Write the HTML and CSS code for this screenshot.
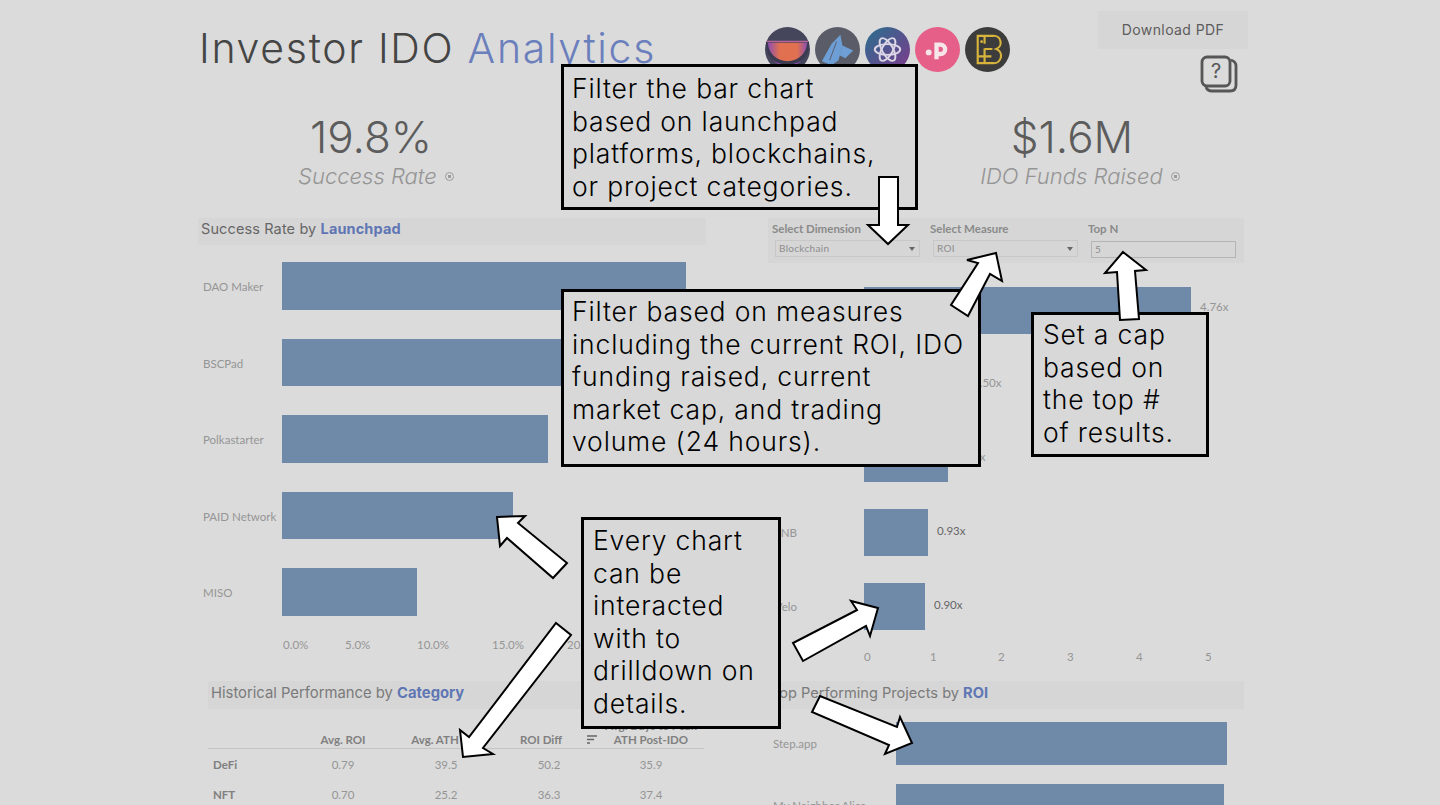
FILE: index.html
```html
<!DOCTYPE html>
<html lang="en">
<head>
    <meta charset="UTF-8">
    <meta name="viewport" content="width=device-width, initial-scale=1.0">
    <title>Investor IDO Analytics</title>
    <link rel="stylesheet" href="styles.css">
</head>
<body>
    <div class="dash">
        <header class="top">
            <h1 class="title">Investor IDO <span class="accent">Analytics</span></h1>
            <div class="logos">
                <svg class="logo" viewBox="0 0 46 46">
                    <defs>
                        <linearGradient id="bowl" x1="0" x2="1" y1="0" y2="0">
                            <stop offset="0" stop-color="#8d4fb4"/>
                            <stop offset="0.3" stop-color="#e0704f"/>
                            <stop offset="0.75" stop-color="#e0704f"/>
                            <stop offset="1" stop-color="#8d4fb4"/>
                        </linearGradient>
                    </defs>
                    <circle cx="23" cy="23" r="23" fill="#45465c"/>
                    <path d="M1 15H45V18A22 22 0 0 1 1 18Z" fill="#3a3b50"/>
                    <path d="M2 14H44V15.5H2Z" fill="#b8639a"/>
                    <path d="M3 16H43A20 19 0 0 1 3 16Z" fill="url(#bowl)"/>
                    <path d="M8 34Q23 43 38 34Q30 41 23 41Q16 41 8 34Z" fill="#8d4fb4"/>
                </svg>
                <svg class="logo" viewBox="0 0 46 46">
                    <circle cx="23" cy="23" r="23" fill="#5a5d68"/>
                    <path d="M7 35L17 17L26 8L28 19L24 34L17 39Z" fill="#6d9fd6"/>
                    <path d="M15 34L22 15" stroke="#5a5d68" stroke-width="1"/>
                    <path d="M28 19L39 24L31 32L25 29Z" fill="#6d9fd6"/>
                </svg>
                <svg class="logo" viewBox="0 0 46 46">
                    <defs>
                        <linearGradient id="knot" x1="0" x2="1" y1="0" y2="1">
                            <stop offset="0" stop-color="#27708f"/>
                            <stop offset="1" stop-color="#80398c"/>
                        </linearGradient>
                    </defs>
                    <circle cx="23" cy="23" r="23" fill="url(#knot)"/>
                    <g fill="none" stroke="#dcd6e6" stroke-width="2">
                        <ellipse cx="23" cy="23" rx="13" ry="5.5"/>
                        <ellipse cx="23" cy="23" rx="13" ry="5.5" transform="rotate(60 23 23)"/>
                        <ellipse cx="23" cy="23" rx="13" ry="5.5" transform="rotate(120 23 23)"/>
                    </g>
                </svg>
                <svg class="logo" viewBox="0 0 46 46">
                    <circle cx="23" cy="23" r="23" fill="#e65f88"/>
                    <path d="M22 33V18H26A4.8 4.8 0 0 1 26 27.6H22" fill="none" stroke="#f6e6ea" stroke-width="4.4"/>
                    <circle cx="14" cy="26" r="3" fill="#f6e6ea"/>
                </svg>
                <svg class="logo" viewBox="0 0 46 46">
                    <circle cx="23" cy="23" r="23" fill="#3c3c3c"/>
                    <g fill="none" stroke="#d8b43c" stroke-width="2.2">
                        <path d="M13 9H29A7 7 0 0 1 32 22.5A7.5 7.5 0 0 1 29 37H13Z"/>
                        <path d="M20 9V17M20 22V37M20 22.5H28M13 30H27"/>
                    </g>
                    <circle cx="17" cy="15" r="1.4" fill="#d8b43c"/>
                </svg>
            </div>
            <div class="actions">
                <div class="download">Download PDF</div>
                <svg class="help" viewBox="0 0 38 38">
                    <path d="M31 5C34 6 36 8 36 11V30C36 34 34 36 30 36H12C9 36 7 35 6 32" fill="none" stroke="#565656" stroke-width="2.8"/>
                    <rect x="2" y="2" width="28" height="29" rx="5" fill="#dbdbdb" stroke="#565656" stroke-width="2.8"/>
                    <text x="16" y="23" class="help-mark">?</text>
                </svg>
            </div>
        </header>

        <section class="kpis">
            <div class="kpi">
                <div class="kpi-value">19.8%</div>
                <div class="kpi-label">Success Rate <span class="info"></span></div>
            </div>
            <div class="kpi">
                <div class="kpi-value">$1.6M</div>
                <div class="kpi-label wide">IDO Funds Raised <span class="info"></span></div>
            </div>
        </section>

        <section class="panels">
            <div class="panel">
                <div class="panel-head">Success Rate by <b>Launchpad</b></div>
                <div class="bars">
                    <div class="row"><span class="name">DAO Maker</span><div class="bar" style="width:404px"></div></div>
                    <div class="row"><span class="name">BSCPad</span><div class="bar" style="width:370px"></div></div>
                    <div class="row"><span class="name">Polkastarter</span><div class="bar" style="width:266px"></div></div>
                    <div class="row"><span class="name">PAID Network</span><div class="bar" style="width:231px"></div></div>
                    <div class="row"><span class="name">MISO</span><div class="bar" style="width:135px"></div></div>
                </div>
                <div class="axis pct">
                    <span>0.0%</span><span>5.0%</span><span>10.0%</span><span>15.0%</span><span>20.0%</span>
                </div>
            </div>

            <div class="panel">
                <div class="filters">
                    <div class="filter">
                        <label>Select Dimension</label>
                        <div class="select">Blockchain<i class="caret"></i></div>
                    </div>
                    <div class="filter">
                        <label>Select Measure</label>
                        <div class="select">ROI<i class="caret"></i></div>
                    </div>
                    <div class="filter">
                        <label>Top N</label>
                        <div class="select number">5</div>
                    </div>
                </div>
                <div class="bars roi">
                    <div class="row"><span class="name"></span><div class="bar" style="width:327px"></div><span class="val first">4.76x</span></div>
                    <div class="row"><span class="name"></span><div class="bar" style="width:100px"></div><span class="val">1.50x</span></div>
                    <div class="row"><span class="name"></span><div class="bar" style="width:84px"></div><span class="val">1.22x</span></div>
                    <div class="row"><span class="name">BNB</span><div class="bar" style="width:64px"></div><span class="val dark">0.93x</span></div>
                    <div class="row"><span class="name">Velo</span><div class="bar" style="width:61px"></div><span class="val dark">0.90x</span></div>
                </div>
                <div class="axis nums">
                    <span>0</span><span>1</span><span>2</span><span>3</span><span>4</span><span>5</span>
                </div>
            </div>

            <div class="panel cat">
                <div class="panel-head">Historical Performance by <b>Category</b></div>
                <div class="table">
                    <div class="tr th">
                        <span></span>
                        <span>Avg. ROI</span>
                        <span>Avg. ATH</span>
                        <span>ROI Diff</span>
                        <span class="sort">
                            <svg viewBox="0 0 10 9"><path d="M0 1H10M0 4.5H7M0 8H3" stroke="#666" stroke-width="1.3"/></svg>
                        </span>
                        <span>Avg. Days to Peak<br>ATH Post-IDO</span>
                    </div>
                    <div class="tr">
                        <span class="cat-name">DeFi</span><span>0.79</span><span class="shift-a">39.5</span><span class="shift-b">50.2</span><span></span><span>35.9</span>
                    </div>
                    <div class="tr">
                        <span class="cat-name">NFT</span><span>0.70</span><span class="shift-a">25.2</span><span class="shift-b">36.3</span><span></span><span>37.4</span>
                    </div>
                </div>
            </div>

            <div class="panel">
                <div class="panel-head top-roi">Top Performing Projects by <b>ROI</b></div>
                <div class="bars projects">
                    <div class="row"><span class="name">Step.app</span><div class="bar" style="width:331px"></div></div>
                    <div class="row"><span class="name">My Neighbor Alice</span><div class="bar" style="width:328px"></div></div>
                </div>
            </div>
        </section>
    </div>

    <!-- annotations on top of the dashboard -->
    <div class="note note-bar">Filter the bar chart<br>based on launchpad<br>platforms, blockchains,<br>or project categories.</div>
    <div class="note note-measure">Filter based on measures<br>including the current ROI, IDO<br>funding raised, current<br>market cap, and trading<br>volume (24 hours).</div>
    <div class="note note-cap">Set a cap<br>based on<br>the top #<br>of results.</div>
    <div class="note note-every">Every chart<br>can be<br>interacted<br>with to<br>drilldown on<br>details.</div>

    <svg class="arrows" viewBox="0 0 1440 805">
        <polygon points="879,177 898,177 898,225 908,225 888,244 868,225 879,225"/>
        <polygon points="996,253 1002,281 990,274 968,316 951,305 978,263 967,260"/>
        <polygon points="1123,252 1146,270 1135,271 1139,319 1120,320 1117,272 1105,273"/>
        <polygon points="497,517 525,516 518,523 567,563 553,578 507,538 500,546"/>
        <polygon points="556,623 571,635 483,748 493,754 463,757 460,730 469,737"/>
        <polygon points="878,608 851,601 857,610 793,643 803,661 866,626 870,636"/>
        <polygon points="820,696 812,712 889,745 885,754 912,743 900,717 897,727"/>
    </svg>
</body>
</html>
```

FILE: styles.css
```css
* {
    box-sizing: border-box;
}
html, body {
    height: 100%;
}
body {
    margin: 0;
    background-color: #dbdbdb;
    font-family: 'Inter', 'Lato', sans-serif;
    color: #5a5a5a;
    overflow: hidden;
}
.dash {
    width: 1050px;
    height: 805px;
    margin-left: 198px;
    overflow: hidden;
}

/* header */
.top {
    display: flex;
    height: 120px;
    padding-top: 11px;
}
.title {
    margin: 14px 0 0 1px;
    width: 566px;
    font-size: 41px;
    line-height: 46px;
    font-weight: 300;
    letter-spacing: 1.7px;
    color: #454545;
    white-space: nowrap;
}
.accent {
    color: #6b7fbd;
}
.logos {
    display: flex;
    gap: 5px;
    margin-top: 16px;
    height: 45px;
}
.logo {
    width: 45px;
    height: 45px;
}
.actions {
    margin-left: auto;
    width: 150px;
    display: flex;
    flex-direction: column;
    align-items: flex-end;
}
.download {
    width: 150px;
    height: 38px;
    line-height: 38px;
    text-align: center;
    background: #d6d6d6;
    font-size: 14px;
    letter-spacing: 0.4px;
    color: #5c5c5c;
}
.help {
    width: 38px;
    height: 38px;
    margin: 6px 10px 0 0;
}
.help-mark {
    font-size: 20px;
    fill: #565656;
    text-anchor: middle;
}

/* big numbers */
.kpis {
    display: grid;
    grid-template-columns: 346px 346px;
    justify-content: space-between;
    width: 1047px;
    height: 87px;
}
.kpi {
    text-align: center;
}
.kpi-value {
    font-size: 44px;
    line-height: 50px;
    font-weight: 300;
    color: #5c5c5c;
    margin-top: -8px;
}
.kpi-label {
    font-size: 22px;
    line-height: 28px;
    font-style: italic;
    font-weight: 300;
    color: #959595;
    padding-left: 10px;
}
.kpi-label.wide {
    padding-left: 16px;
}
.info {
    display: inline-block;
    width: 9px;
    height: 9px;
    margin-left: 2px;
    border: 1.5px solid #9c9c9c;
    border-radius: 50%;
    background: radial-gradient(circle, #9c9c9c 0 1.5px, transparent 2px);
    vertical-align: 3px;
}

/* chart panels */
.panels {
    display: grid;
    grid-template-columns: 508px 476px;
    grid-template-rows: 463px 124px;
    column-gap: 62px;
    margin-top: 11px;
}
.panel-head {
    height: 27px;
    line-height: 22px;
    padding-left: 3px;
    background: #d6d6d6;
    font-size: 14.5px;
    letter-spacing: 0.12px;
    color: #666;
}
.panel-head b {
    color: #6076b4;
    font-weight: 700;
}
.bars {
    display: flex;
    flex-direction: column;
    gap: 29px;
    margin-top: 17px;
}
.row {
    display: flex;
    align-items: center;
    height: 47.5px;
}
.bar {
    height: 100%;
    background: #6f89a8;
}
.name {
    width: 84px;
    flex-shrink: 0;
    padding: 2px 0 0 5px;
    font-family: 'Lato', sans-serif;
    font-size: 11.5px;
    color: #959595;
    white-space: nowrap;
}
.axis {
    display: grid;
    font-family: 'Lato', sans-serif;
    font-size: 11.5px;
    color: #959595;
}
.axis.pct {
    grid-template-columns: 62px 72px 75px 75px 75px;
    padding-left: 85px;
    margin-top: 22px;
}

/* filters */
.filters {
    display: flex;
    gap: 13px;
    height: 45px;
    padding: 5px 7px 0 7px;
    background: #d6d6d6;
    font-family: 'Lato', sans-serif;
}
.filter {
    width: 145px;
}
.filter label {
    display: block;
    margin-left: -3px;
    font-size: 11.5px;
    line-height: 12px;
    font-weight: 700;
    color: #8a8a8a;
}
.select {
    position: relative;
    height: 17px;
    margin-top: 5px;
    padding-left: 3px;
    border: 1px solid #c8c8c8;
    font-size: 10px;
    line-height: 15px;
    letter-spacing: 0.3px;
    color: #8d8d8d;
}
.number {
    margin-top: 6px;
    border-color: #b5b5b5;
}
.caret {
    position: absolute;
    right: 4px;
    top: 6px;
    border: 3px solid transparent;
    border-top: 4px solid #666;
    border-bottom: 0;
}
.roi {
    margin-top: 24px;
    gap: 27.5px;
}
.roi .row {
    height: 46.5px;
}
.roi .name {
    width: 96px;
    padding: 0 67px 0 0;
    text-align: right;
}
.roi .name:empty {
    padding: 0;
}
.val {
    margin: 0 0 4px 9px;
    font-family: 'Lato', sans-serif;
    font-size: 11.5px;
    color: #959595;
}
.val.first {
    margin-bottom: 8px;
}
.val.dark {
    color: #666;
}
.nums {
    grid-template-columns: 66px 68px 69px 69px 69px 69px;
    padding-left: 96px;
    margin-top: 20px;
}

/* bottom left table */
.cat {
    padding-left: 10px;
}
.cat .panel-head {
    height: 28px;
    line-height: 24px;
    color: #7a7a7a;
    font-size: 14.8px;
    letter-spacing: 0;
}
.table {
    margin-top: 4px;
    width: 496px;
    font-family: 'Lato', sans-serif;
    font-size: 11.5px;
    color: #959595;
}
.tr {
    display: grid;
    grid-template-columns: 105px 60px 124px 88px 13px 106px;
    height: 30px;
    align-items: center;
    text-align: center;
}
.th {
    height: 36px;
    align-items: end;
    border-bottom: 1px solid #c4c4c4;
    font-weight: 700;
    line-height: 14px;
    color: #808080;
    padding-bottom: 1px;
}
.shift-a {
    padding-left: 22px;
}
.shift-b {
    padding-left: 16px;
}
.sort svg {
    width: 10px;
    height: 9px;
    display: block;
    margin: 0 auto 3px;
}
.cat-name {
    text-align: left;
    padding-left: 5px;
    font-weight: 700;
    color: #808080;
}
.top-roi {
    height: 28px;
    line-height: 24px;
    font-size: 14.6px;
    letter-spacing: 0;
    color: #7a7a7a;
}
.projects {
    margin-top: 13px;
    gap: 19px;
}
.projects .row {
    height: 43px;
}
.projects .name {
    width: 128px;
    padding-top: 0;
}

/* annotations */
.note {
    position: absolute;
    border: 3px solid #000;
    background: #d8d8d8;
    font-size: 26.5px;
    line-height: 32.6px;
    font-weight: 300;
    letter-spacing: 0.85px;
    color: #000;
    white-space: nowrap;
}
.note-bar {
    left: 561px;
    top: 64px;
    width: 357px;
    height: 146px;
    padding: 5px 0 0 8px;
}
.note-measure {
    left: 561px;
    top: 289px;
    width: 420px;
    height: 178px;
    padding: 3px 0 0 8px;
}
.note-cap {
    left: 1031px;
    top: 312px;
    width: 178px;
    height: 145px;
    padding: 3px 0 0 9px;
}
.note-every {
    left: 581px;
    top: 517px;
    width: 200px;
    height: 212px;
    padding: 4px 0 0 9px;
}
.arrows {
    position: absolute;
    left: 0;
    top: 0;
    width: 1440px;
    height: 805px;
    pointer-events: none;
}
.arrows polygon {
    fill: #fff;
    stroke: #000;
    stroke-width: 2;
}
```
